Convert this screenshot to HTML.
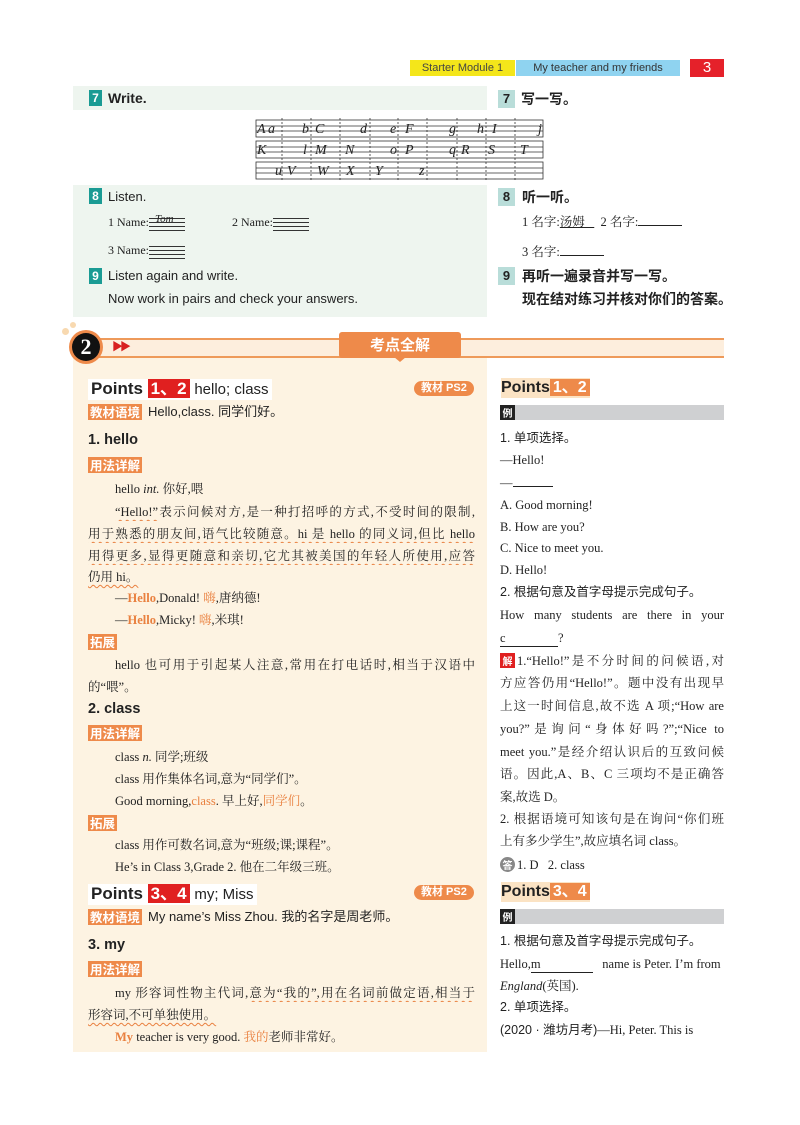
<!DOCTYPE html>
<html><head><meta charset="utf-8">
<style>
body{margin:0;width:800px;height:1125px;position:relative;background:#fff;overflow:hidden;font-family:"Liberation Serif","Noto Serif CJK SC",serif;color:#222}
.a{position:absolute;white-space:nowrap}
.s{font-family:"Liberation Sans","Noto Sans CJK SC",sans-serif}
.l{position:absolute;white-space:nowrap;font-size:12.5px;line-height:18px;height:18px}
.j{text-align:justify;text-align-last:justify;overflow:hidden}
.tag{position:absolute;background:#ee8a4a;color:#fff;font-family:"Noto Sans CJK SC",sans-serif;font-weight:bold;font-size:12.5px;line-height:16px;padding:0 2px;height:16px}
.o{color:#e9803f}
.w{text-decoration:underline wavy #e9803f;text-decoration-thickness:1px;text-underline-offset:3px}
.num{position:absolute;background:#1a9b94;color:#fff;font:bold 12px/16px "Liberation Sans",sans-serif;width:13px;text-align:center;height:16px}
.numr{position:absolute;background:#b9ddd9;color:#222;font:bold 13px/18px "Liberation Sans",sans-serif;width:17px;text-align:center;height:18px}
.h{font-family:"Liberation Sans","Noto Sans CJK SC",sans-serif;font-weight:bold;font-size:14px}
.pt{position:absolute;font:bold 17px/20px "Liberation Sans",sans-serif;white-space:nowrap}
.red{background:#e02020;color:#fff;padding:0 3px}
.or{background:#ee8a4a;color:#fff;padding:0 3px}
.pill{position:absolute;background:#ee8a4a;color:#fff;font:bold 11px/15px "Liberation Sans","Noto Sans CJK SC",sans-serif;border-radius:8px;padding:0 7px;height:15px}
.li{position:absolute;background:#cfd0d2;height:15px}
.li b{position:absolute;left:0;top:0;width:15px;height:15px;background:#222;color:#fff;font:bold 10px/15px "Noto Sans CJK SC",sans-serif;text-align:center}
.u{display:inline-block;border-bottom:1px solid #222;height:12px;vertical-align:baseline}
.nm{display:inline-block;width:36px;height:13px;vertical-align:-5px;background:linear-gradient(#333 0 1px,transparent 1px 4px,#333 4px 5px,transparent 5px 8px,#333 8px 9px,transparent 9px 12px,#333 12px 13px)}
.circ{position:absolute;left:72px;top:333px;width:28px;height:28px;border-radius:50%;background:#111;color:#fff;font-family:"Liberation Serif",serif;font-weight:bold;font-size:22px;line-height:28px;text-align:center}
.tab{position:absolute;left:339px;top:332px;width:122px;height:26px;background:#ee8a4a;border-radius:3px;color:#fff;font-family:"Noto Sans CJK SC",sans-serif;font-weight:bold;font-size:15px;line-height:26px;text-align:center}
.sq{position:absolute;width:15px;height:15px;color:#fff;font-family:"Noto Sans CJK SC",sans-serif;font-weight:bold;font-size:10px;line-height:15px;text-align:center}
</style></head><body>

<div class="a s" style="left:410px;top:60px;width:105px;height:16px;background:#f4e61a;font-size:11px;line-height:16px;text-align:center;color:#444">Starter Module 1</div>
<div class="a s" style="left:516px;top:60px;width:164px;height:16px;background:#8fd3f0;font-size:11px;line-height:16px;text-align:center;color:#333">My teacher and my friends</div>
<div class="a s" style="left:690px;top:59px;width:34px;height:18px;background:#e5212a;color:#fff;font-size:15px;line-height:18px;text-align:center">3</div>

<div class="a" style="left:73px;top:86px;width:414px;height:24px;background:#eef5ef"></div>
<div class="num" style="left:89px;top:90px">7</div>
<div class="a h" style="left:108px;top:89px;line-height:18px">Write.</div>
<div class="numr" style="left:498px;top:90px">7</div>
<div class="a h" style="left:521px;top:90px;line-height:18px">写一写。</div>

<svg class="a" style="left:255px;top:118px" width="290" height="62">
<g stroke="#333" stroke-width="0.8" fill="none">
<rect x="1" y="2" width="287" height="17"/><line x1="1" y1="8" x2="288" y2="8"/><line x1="1" y1="13" x2="288" y2="13"/>
<rect x="1" y="23" width="287" height="17"/><line x1="1" y1="29" x2="288" y2="29"/><line x1="1" y1="34" x2="288" y2="34"/>
<rect x="1" y="44" width="287" height="17"/><line x1="1" y1="50" x2="288" y2="50"/><line x1="1" y1="55" x2="288" y2="55"/>
<g stroke-dasharray="2,2"><line x1="27" y1="0" x2="27" y2="62"/><line x1="56" y1="0" x2="56" y2="62"/><line x1="85" y1="0" x2="85" y2="62"/><line x1="115" y1="0" x2="115" y2="62"/><line x1="143" y1="0" x2="143" y2="62"/><line x1="172" y1="0" x2="172" y2="62"/><line x1="202" y1="0" x2="202" y2="62"/><line x1="231" y1="0" x2="231" y2="62"/><line x1="260" y1="0" x2="260" y2="62"/></g>
</g>
<g font-family="Liberation Serif" font-style="italic" font-size="14" fill="#222">
<text x="2" y="15">A</text><text x="13" y="15">a</text><text x="47" y="15">b</text><text x="60" y="15">C</text><text x="105" y="15">d</text><text x="135" y="15">e</text><text x="150" y="15">F</text><text x="194" y="15">g</text><text x="222" y="15">h</text><text x="237" y="15">I</text><text x="283" y="15">j</text>
<text x="2" y="36">K</text><text x="48" y="36">l</text><text x="60" y="36">M</text><text x="90" y="36">N</text><text x="135" y="36">o</text><text x="150" y="36">P</text><text x="194" y="36">q</text><text x="206" y="36">R</text><text x="233" y="36">S</text><text x="265" y="36">T</text>
<text x="20" y="57">u</text><text x="32" y="57">V</text><text x="62" y="57">W</text><text x="91" y="57">X</text><text x="120" y="57">Y</text><text x="164" y="57">z</text>
</g></svg>

<div class="a" style="left:73px;top:185px;width:414px;height:132px;background:#eef5ef"></div>
<div class="num" style="left:89px;top:188px">8</div>
<div class="a s" style="left:108px;top:188px;line-height:17px;font-size:13px">Listen.</div>
<div class="l" style="left:108px;top:213px;font-size:12px">1 Name:<span class="nm" style="position:relative"><i style="position:absolute;left:6px;top:-5px;font-size:11px;line-height:12px">Tom</i></span></div>
<div class="l" style="left:232px;top:213px;font-size:12px">2 Name:<span class="nm"></span></div>
<div class="l" style="left:108px;top:241px;font-size:12px">3 Name:<span class="nm"></span></div>
<div class="num" style="left:89px;top:268px">9</div>
<div class="a s" style="left:108px;top:267px;font-size:13px;line-height:17px">Listen again and write.</div>
<div class="a s" style="left:108px;top:290px;font-size:13px;line-height:17px">Now work in pairs and check your answers.</div>

<div class="numr" style="left:498px;top:188px">8</div>
<div class="a h" style="left:522px;top:188px;line-height:18px">听一听。</div>
<div class="l" style="left:522px;top:213px">1 名字:<span style="text-decoration:underline">汤姆&#160;&#160;&#160;</span>&#160;&#160;2 名字:<span class="u" style="width:44px"></span></div>
<div class="l" style="left:522px;top:243px">3 名字:<span class="u" style="width:44px"></span></div>
<div class="numr" style="left:498px;top:267px">9</div>
<div class="a h" style="left:522px;top:267px;line-height:18px">再听一遍录音并写一写。</div>
<div class="a h" style="left:522px;top:290px;line-height:18px">现在结对练习并核对你们的答案。</div>

<div class="a" style="left:73px;top:356px;width:414px;height:696px;background:#fdf3e2"></div>
<div class="a" style="left:95px;top:338px;width:629px;height:16px;background:#fdeedd;border-top:2px solid #ee9a5a;border-bottom:2px solid #ee9a5a"></div>
<div class="a" style="left:62px;top:328px;width:7px;height:7px;border-radius:50%;background:#f8d9b0"></div>
<div class="a" style="left:70px;top:322px;width:6px;height:6px;border-radius:50%;background:#f8d9b0"></div>
<div class="a" style="left:69px;top:330px;width:34px;height:34px;border-radius:50%;background:#ee8a4a"></div>
<div class="circ">2</div>
<div class="a" style="left:112px;top:341px;color:#d82020;font-size:11px;line-height:12px;letter-spacing:-3px">▶▶</div>
<div class="tab">考点全解</div>
<div class="a" style="left:394px;top:357px;width:0;height:0;border-left:6px solid transparent;border-right:6px solid transparent;border-top:5px solid #ee8a4a"></div>

<div class="pt" style="left:88px;top:379px;background:#fff;padding:0 3px">Points <span class="red">1、2</span> <span style="font-weight:normal;font-size:15px">hello; class</span></div>
<div class="pill" style="left:414px;top:381px">教材 PS2</div>
<div class="tag" style="left:88px;top:404px">教材语境</div>
<div class="l s" style="left:148px;top:403px;font-size:13px">Hello,class. 同学们好。</div>
<div class="a s" style="left:88px;top:431px;font-size:14.5px;line-height:18px;font-weight:bold">1. hello</div>
<div class="tag" style="left:88px;top:457px">用法详解</div>
<div class="l" style="left:115px;top:480px">hello <i>int.</i> 你好,喂</div>
<div class="l j" style="left:115px;top:503px;width:360px"><span class="w">“Hello!”</span>表示问候对方,是一种打招呼的方式,不受时间的限制,</div>
<div class="l j w" style="left:88px;top:525px;width:387px">用于熟悉的朋友间,语气比较随意。hi 是 hello 的同义词,但比 hello</div>
<div class="l j w" style="left:88px;top:547px;width:387px">用得更多,显得更随意和亲切,它尤其被美国的年轻人所使用,应答</div>
<div class="l w" style="left:88px;top:568px">仍用 hi。</div>
<div class="l" style="left:115px;top:589px">—<b class="o">Hello</b>,Donald! <span class="o">嗨</span>,唐纳德!</div>
<div class="l" style="left:115px;top:611px">—<b class="o">Hello</b>,Micky! <span class="o">嗨</span>,米琪!</div>
<div class="tag" style="left:88px;top:634px">拓展</div>
<div class="l j" style="left:115px;top:656px;width:360px">hello 也可用于引起某人注意,常用在打电话时,相当于汉语中</div>
<div class="l" style="left:88px;top:678px">的“喂”。</div>
<div class="a s" style="left:88px;top:700px;font-size:14.5px;line-height:18px;font-weight:bold">2. class</div>
<div class="tag" style="left:88px;top:725px">用法详解</div>
<div class="l" style="left:115px;top:748px">class <i>n.</i> 同学;班级</div>
<div class="l" style="left:115px;top:770px">class 用作集体名词,意为“同学们”。</div>
<div class="l" style="left:115px;top:792px">Good morning,<span class="o">class</span>. 早上好,<span class="o">同学们</span>。</div>
<div class="tag" style="left:88px;top:815px">拓展</div>
<div class="l" style="left:115px;top:836px">class 用作可数名词,意为“班级;课;课程”。</div>
<div class="l" style="left:115px;top:858px">He’s in Class 3,Grade 2. 他在二年级三班。</div>
<div class="pt" style="left:88px;top:884px;background:#fff;padding:0 3px">Points <span class="red">3、4</span> <span style="font-weight:normal;font-size:15px">my; Miss</span></div>
<div class="pill" style="left:414px;top:885px">教材 PS2</div>
<div class="tag" style="left:88px;top:909px">教材语境</div>
<div class="l s" style="left:148px;top:908px;font-size:13px">My name’s Miss Zhou. 我的名字是周老师。</div>
<div class="a s" style="left:88px;top:936px;font-size:14.5px;line-height:18px;font-weight:bold">3. my</div>
<div class="tag" style="left:88px;top:961px">用法详解</div>
<div class="l j" style="left:115px;top:984px;width:360px">my 形容词性物主代词,<span class="w">意为“我的”,用在名词前做定语,相当于</span></div>
<div class="l w" style="left:88px;top:1006px">形容词,不可单独使用。</div>
<div class="l" style="left:115px;top:1028px"><b class="o">My</b> teacher is very good. <span class="o">我的</span>老师非常好。</div>

<div class="pt" style="left:501px;top:378px;background:#fbe3c4;font-size:16px">Points<span class="or">1、2</span></div>
<div class="li" style="left:500px;top:405px;width:224px"><b>例</b></div>
<div class="l s" style="left:500px;top:429px;font-size:12.5px">1. 单项选择。</div>
<div class="l" style="left:500px;top:451px">—Hello!</div>
<div class="l" style="left:500px;top:474px">—<span class="u" style="width:40px"></span></div>
<div class="l" style="left:500px;top:496px">A. Good morning!</div>
<div class="l" style="left:500px;top:518px">B. How are you?</div>
<div class="l" style="left:500px;top:539px">C. Nice to meet you.</div>
<div class="l" style="left:500px;top:561px">D. Hello!</div>
<div class="l s" style="left:500px;top:583px">2. 根据句意及首字母提示完成句子。</div>
<div class="l j" style="left:500px;top:606px;width:224px">How many students are there in your</div>
<div class="l" style="left:500px;top:629px"><span style="display:inline-block;border-bottom:1px solid #222;width:58px;line-height:15px">c</span>?</div>
<div class="sq" style="left:500px;top:653px;background:#e02020">解</div>
<div class="l j" style="left:517px;top:652px;width:207px">1.“Hello!”是不分时间的问候语,对</div>
<div class="l j" style="left:500px;top:674px;width:224px">方应答仍用“Hello!”。题中没有出现早</div>
<div class="l j" style="left:500px;top:697px;width:224px">上这一时间信息,故不选 A 项;“How are</div>
<div class="l j" style="left:500px;top:720px;width:224px">you?”是询问“身体好吗?”;“Nice to</div>
<div class="l j" style="left:500px;top:743px;width:224px">meet you.”是经介绍认识后的互致问候</div>
<div class="l j" style="left:500px;top:765px;width:224px">语。因此,A、B、C 三项均不是正确答</div>
<div class="l" style="left:500px;top:788px">案,故选 D。</div>
<div class="l j" style="left:500px;top:810px;width:224px">2. 根据语境可知该句是在询问“你们班</div>
<div class="l" style="left:500px;top:832px">上有多少学生”,故应填名词 class。</div>
<div class="sq" style="left:500px;top:857px;border-radius:50%;background:#888">答</div>
<div class="l" style="left:517px;top:856px">1. D&#160;&#160;&#160;2. class</div>
<div class="pt" style="left:501px;top:882px;background:#fbe3c4;font-size:16px">Points<span class="or">3、4</span></div>
<div class="li" style="left:500px;top:909px;width:224px"><b>例</b></div>
<div class="l s" style="left:500px;top:932px">1. 根据句意及首字母提示完成句子。</div>
<div class="l" style="left:500px;top:955px;width:224px">Hello,<span style="display:inline-block;border-bottom:1px solid #222;width:62px;line-height:15px">m</span>&#160;&#160;&#160;name is Peter. I’m from</div>
<div class="l" style="left:500px;top:977px"><i>England</i>(英国).</div>
<div class="l s" style="left:500px;top:998px">2. 单项选择。</div>
<div class="l" style="left:500px;top:1021px"><span class="s">(2020 · 潍坊月考)</span>—Hi, Peter. This is</div>
</body></html>
